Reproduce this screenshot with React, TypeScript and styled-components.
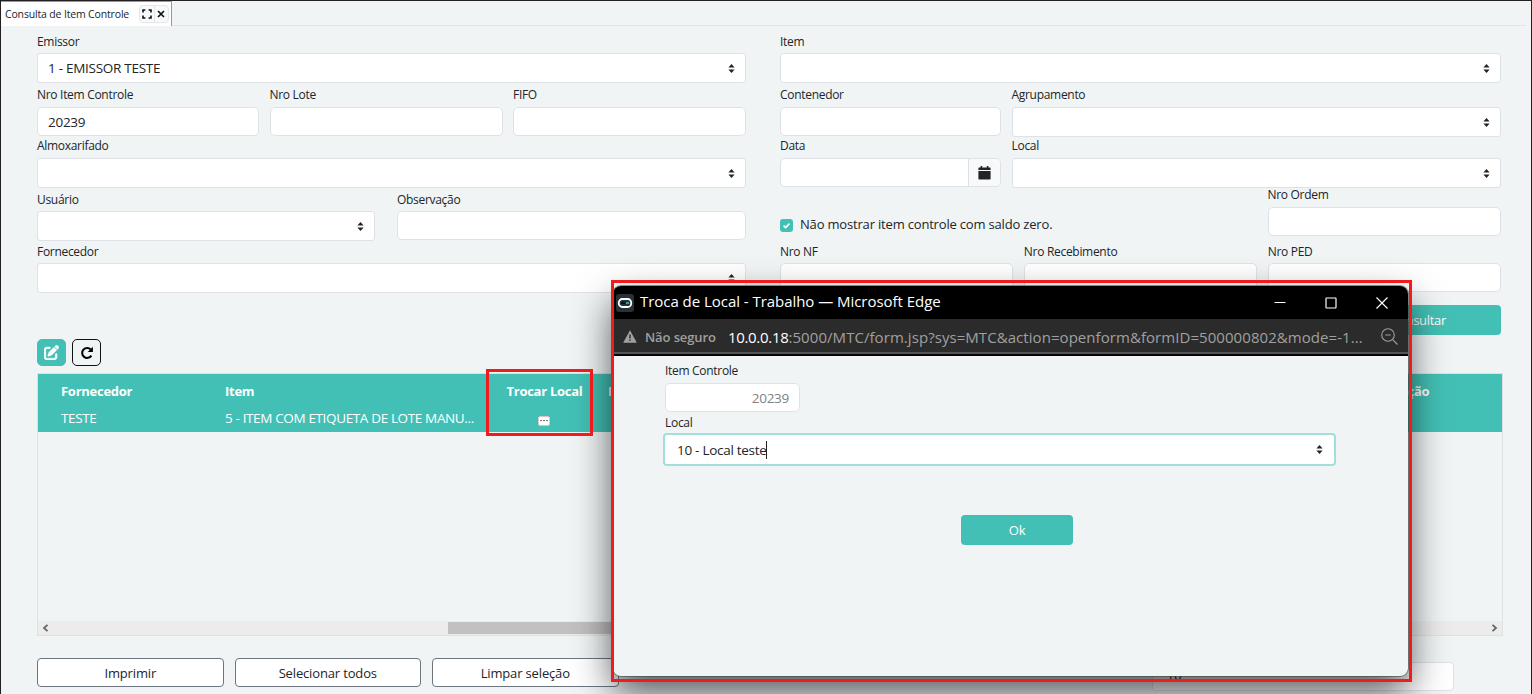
import React from "react";
import styled, { createGlobalStyle, css } from "styled-components";

const teal = "#43c0b5";
const pageBg = "#f0f4f5";
const line = "#dee2e6";
const ink = "#212529";
const red = "#ee1c1c";

const GlobalStyle = createGlobalStyle`
  * { box-sizing: border-box; }
  body { margin: 0; background: ${pageBg}; overflow: hidden; }
  body, input, button { font-family: "Open Sans", "Noto Sans", sans-serif; color: ${ink}; }
`;

const Page = styled.div`
  position: relative;
  width: 1532px;
  height: 694px;
  overflow: hidden;
  background: ${pageBg};
  border: 1px solid #231f20;
  border-bottom: 0;
`;

const TabBar = styled.div`
  display: flex;
  height: 25px;
  margin: 0 5px 1px 0;
  border-bottom: 1px solid #e1e5e8;
`;

const Tab = styled.div`
  display: flex;
  align-items: center;
  width: 171px;
  height: 25px;
  padding-left: 4px;
  background: #fff;
  border-top: 1px solid ${teal};
  border-right: 1px solid ${teal};
`;

const TabTitle = styled.span`
  flex: 1;
  font-size: 10.5px;
  letter-spacing: -0.16px;
  line-height: 22px;
  white-space: nowrap;
`;

const TabTools = styled.div`
  display: flex;
  width: 30px;
  height: 18px;
  margin-right: 2px;
  border: 1px solid #e3e6ea;
  border-radius: 4px;
  background: #f8f9fa;
`;

const TabTool = styled.span`
  display: flex;
  flex: 1;
  align-items: center;
  justify-content: center;
  & + & { border-left: 1px solid #e3e6ea; }
`;

const Form = styled.div`
  display: grid;
  grid-template-columns: 709px 721px;
  column-gap: 34px;
  padding: 6px 0 0 36px;
`;

const FormColumn = styled.div`
  display: flex;
  flex-direction: column;
`;

const FormRow = styled.div<{ $h: number; $gap?: number }>`
  display: flex;
  gap: ${(p) => p.$gap ?? 10.5}px;
  height: ${(p) => p.$h}px;
`;

const FieldBox = styled.div<{ $w?: number; $up?: number }>`
  ${(p) => (p.$w ? `width: ${p.$w}px;` : "flex: 1;")}
  margin-top: ${(p) => -(p.$up ?? 0)}px;
`;

const Label = styled.div<{ $tall?: boolean }>`
  height: 20px;
  font-size: 12px;
  line-height: ${(p) => (p.$tall ? 17 : 16)}px;
  letter-spacing: -0.3px;
  white-space: nowrap;
`;

const controlText = css`
  font-size: 13.5px;
  letter-spacing: -0.28px;
  white-space: nowrap;
`;

const Control = styled.div<{ $select?: boolean }>`
  display: flex;
  align-items: center;
  justify-content: space-between;
  height: ${(p) => (p.$select ? 30 : 29)}px;
  padding: 0 10px;
  background: #fff;
  border: 1px solid ${line};
  border-radius: ${(p) => (p.$select ? 3 : 5)}px;
  ${controlText}
`;

const DateGroup = styled.div`
  display: flex;
  height: 29px;
  background: #fff;
  border: 1px solid ${line};
  border-radius: 5px;
  overflow: hidden;
`;

const DateButton = styled.span`
  display: flex;
  align-items: center;
  justify-content: center;
  width: 32px;
  margin-left: auto;
  background: #f8f9fa;
  border-left: 1px solid ${line};
`;

const CheckRow = styled.div`
  display: flex;
  flex: 1;
  align-items: center;
  gap: 7px;
  height: 20px;
  margin-top: 23px;
  font-size: 13px;
  letter-spacing: -0.18px;
  white-space: nowrap;
`;

const CheckMark = styled.span`
  display: flex;
  width: 13px;
  height: 13px;
  margin-top: 3px;
  border-radius: 3px;
  background: ${teal};
`;

const PrimaryButton = styled.button<{ $w: number }>`
  width: ${(p) => p.$w}px;
  height: 30px;
  padding: 0;
  border: 0;
  border-radius: 4px;
  background: ${teal};
  color: #fff;
  font-size: 13px;
  letter-spacing: -0.3px;
`;

const SubmitRow = styled.div`
  display: flex;
  justify-content: flex-end;
  height: 46px;
  margin-right: 30px;
  padding-top: 12px;
`;

const Toolbar = styled.div`
  display: flex;
  gap: 6px;
  padding-left: 36px;
  height: 34px;
`;

const IconButton = styled.button<{ $outline?: boolean }>`
  display: flex;
  align-items: center;
  justify-content: center;
  width: 29px;
  height: 27px;
  padding: 0;
  border: 1px solid ${(p) => (p.$outline ? "#111" : teal)};
  border-radius: 5px;
  background: ${(p) => (p.$outline ? pageBg : teal)};
`;

const Grid = styled.div`
  display: flex;
  flex-direction: column;
  width: 1466px;
  height: 263px;
  margin-left: 36px;
  border: 1px solid ${line};
`;

const GridLine = styled.div<{ $head?: boolean }>`
  display: grid;
  grid-template-columns: 164px 270px 103px 748px 1fr;
  align-items: center;
  height: ${(p) => (p.$head ? 33 : 25)}px;
  padding: 0 0 ${(p) => (p.$head ? 0 : 3)}px 23px;
  background: ${teal};
  color: #fff;
  font-size: ${(p) => (p.$head ? 13 : 13.5)}px;
  font-weight: ${(p) => (p.$head ? 700 : 400)};
  letter-spacing: ${(p) => (p.$head ? -0.27 : -0.36)}px;
  white-space: nowrap;
`;

const GridCell = styled.span<{ $center?: boolean; $pad?: number }>`
  padding-left: ${(p) => p.$pad ?? 0}px;
  display: flex;
  justify-content: ${(p) => (p.$center ? "center" : "flex-start")};
`;

const MoreButton = styled.span`
  display: flex;
  align-items: center;
  justify-content: center;
  gap: 1px;
  width: 12px;
  height: 10px;
  margin: 5px 0 0 -6px;
  border: 1px solid #d9c9c9;
  border-radius: 2px;
  background: #fff;
  i { width: 2px; height: 1px; background: #777; }
`;

const ScrollBar = styled.div`
  display: flex;
  align-items: center;
  justify-content: space-between;
  height: 14px;
  margin-top: auto;
  padding: 0 4px;
  background: #ececec;
`;

const ScrollThumb = styled.span`
  width: 420px;
  height: 12px;
  margin: 0 auto 0 399px;
  background: #c1c1c1;
`;

const Footer = styled.div`
  display: flex;
  gap: 11px;
  padding: 22px 0 0 36px;
`;

const FooterButton = styled.button`
  width: 186.5px;
  height: 29px;
  padding: 0;
  border: 1px solid #6c757d;
  border-radius: 4px;
  background: #fff;
  font-size: 13px;
  letter-spacing: -0.15px;
`;

const FooterInput = styled.div`
  width: 302px;
  height: 29px;
  margin: 4px 0 0 522px;
  padding: 3px 14px;
  border: 1px solid ${line};
  border-radius: 4px;
  background: #fff;
  ${controlText}
`;

const Highlight = styled.div<{ $x: number; $y: number; $w: number; $h: number }>`
  position: absolute;
  left: ${(p) => p.$x}px;
  top: ${(p) => p.$y}px;
  width: ${(p) => p.$w}px;
  height: ${(p) => p.$h}px;
  border: 3px solid ${red};
`;

const Popup = styled.div`
  position: absolute;
  left: 612px;
  top: 285px;
  width: 795px;
  height: 390px;
  border-radius: 8px;
  background: ${pageBg};
  box-shadow: 0 0 0 1px rgba(60, 70, 65, 0.55), 0 16px 38px rgba(0, 0, 0, 0.68);
`;

const PopupClip = styled.div`
  height: 100%;
  border-radius: 8px;
  overflow: hidden;
`;

const TitleBar = styled.div`
  display: flex;
  align-items: center;
  height: 33px;
  padding: 0 20px 0 3px;
  background: #000;
  color: #fff;
  font-size: 15px;
  white-space: nowrap;
`;

const TitleText = styled.span`
  flex: 1;
  margin: -3px 0 0 6px;
  letter-spacing: -0.04px;
`;

const WindowControls = styled.div`
  display: flex;
  gap: 39px;
`;

const AddressBar = styled.div`
  display: flex;
  align-items: center;
  height: 37px;
  padding: 0 10px 0 10px;
  background: #2b2b2b;
  border-bottom: 2px solid #050505;
  box-shadow: inset 0 -2px 0 #555;
  color: #a0a0a0;
  font-size: 15px;
  white-space: nowrap;
`;

const Unsafe = styled.span`
  margin: 0 12px 0 8px;
  font-size: 13px;
  font-weight: 600;
  letter-spacing: -0.1px;
`;

const Url = styled.span`
  flex: 1;
  letter-spacing: 0.06px;
  b { font-weight: 400; color: #fff; letter-spacing: -0.3px; }
`;

const PopupBody = styled.div`
  padding: 7px 0 0 52px;
`;

const ReadOnly = styled(Control)`
  width: 135px;
  margin-bottom: 3px;
  justify-content: flex-end;
  padding-right: 10px;
  color: #7d8186;
`;

const FocusSelect = styled(Control)`
  width: 673px;
  height: 33px;
  margin: -2px 0 49px -2px;
  padding: 0 11px 0 12px;
  border: 2px solid #a1dfda;
  border-radius: 4px;
`;

const Typed = styled.span`
  display: flex;
  align-items: center;
  &::after { content: ""; width: 1px; height: 18px; margin-left: -1px; background: #222; }
`;

const PopupActions = styled.div`
  padding-left: 296px;
`;

const Sorter = () => (
  <svg width="7" height="9" viewBox="0 0 7 9">
    <path d="M3.5 0 6.6 3.6H.4zM3.5 9 .4 5.4h6.2z" fill="#212529" />
  </svg>
);

type FieldProps = { label: string; value?: string; w?: number; select?: boolean; up?: number; tall?: boolean };

const Field = ({ label, value = "", w, select, up, tall }: FieldProps) => (
  <FieldBox $w={w} $up={up}>
    <Label $tall={tall}>{label}</Label>
    <Control $select={select}>
      <span>{value}</span>
      {select && <Sorter />}
    </Control>
  </FieldBox>
);

export default function App() {
  return (
    <>
      <GlobalStyle />
      <Page>
        <TabBar>
          <Tab>
            <TabTitle>Consulta de Item Controle</TabTitle>
            <TabTools>
              <TabTool>
                <svg width="10" height="10" viewBox="0 0 10 10" fill="none" stroke="#111" strokeWidth="1.6">
                  <path d="M3.4 1H1v2.4M6.6 1H9v2.4M3.4 9H1V6.6M6.6 9H9V6.6" />
                </svg>
              </TabTool>
              <TabTool>
                <svg width="8" height="8" viewBox="0 0 8 8" stroke="#111" strokeWidth="1.7">
                  <path d="M1 1l6 6M7 1L1 7" />
                </svg>
              </TabTool>
            </TabTools>
          </Tab>
        </TabBar>

        <Form>
          <FormColumn>
            <FormRow $h={54}><Field label="Emissor" value="1 - EMISSOR TESTE" select tall /></FormRow>
            <FormRow $h={51}>
              <Field label="Nro Item Controle" value="20239" w={222} />
              <Field label="Nro Lote" w={233} />
              <Field label="FIFO" />
            </FormRow>
            <FormRow $h={53}><Field label="Almoxarifado" select /></FormRow>
            <FormRow $h={52} $gap={22}>
              <Field label="Usuário" w={338} select tall />
              <Field label="Observação" tall />
            </FormRow>
            <FormRow $h={50}><Field label="Fornecedor" select tall /></FormRow>
          </FormColumn>
          <FormColumn>
            <FormRow $h={54}><Field label="Item" select tall /></FormRow>
            <FormRow $h={51}>
              <Field label="Contenedor" w={221} />
              <Field label="Agrupamento" select />
            </FormRow>
            <FormRow $h={53}>
              <FieldBox $w={221}>
                <Label>Data</Label>
                <DateGroup>
                  <DateButton>
                    <svg width="13" height="14" viewBox="0 0 13 14" fill="#212529">
                      <path d="M2.6 0h1.6v1.6h4.6V0h1.6v1.6h1.2c.6 0 1 .4 1 1V4H.4V2.6c0-.6.4-1 1-1h1.2zM.4 5h12.2v7.6c0 .6-.4 1-1 1H1.4c-.6 0-1-.4-1-1z" />
                    </svg>
                  </DateButton>
                </DateGroup>
              </FieldBox>
              <Field label="Local" select />
            </FormRow>
            <FormRow $h={52}>
              <CheckRow>
                <CheckMark>
                  <svg width="13" height="13" viewBox="0 0 13 13" fill="none" stroke="#fff" strokeWidth="1.6">
                    <path d="M3.6 6.6l2 2 3.8-4" />
                  </svg>
                </CheckMark>
                Não mostrar item controle com saldo zero.
              </CheckRow>
              <Field label="Nro Ordem" w={233.5} up={4} />
            </FormRow>
            <FormRow $h={50}>
              <Field label="Nro NF" tall />
              <Field label="Nro Recebimento" tall />
              <Field label="Nro PED" tall />
            </FormRow>
          </FormColumn>
        </Form>

        <SubmitRow><PrimaryButton $w={166}>Consultar</PrimaryButton></SubmitRow>

        <Toolbar>
          <IconButton aria-label="Editar">
            <svg width="15" height="15" viewBox="0 0 512 512" fill="#fff" stroke="#fff" strokeWidth="12">
              <path d="M471.6 21.7c-21.9-21.9-57.3-21.9-79.2 0L362.3 51.7l97.9 97.9 30.1-30.1c21.9-21.9 21.9-57.3 0-79.2L471.6 21.7zm-299.2 220c-6.1 6.1-10.8 13.6-13.5 21.9l-29.6 88.8c-2.9 8.6-.6 18.1 5.8 24.6s15.9 8.7 24.6 5.8l88.8-29.6c8.2-2.7 15.7-7.4 21.9-13.5L437.7 172.3 339.7 74.3 172.4 241.7zM96 64c-53 0-96 43-96 96v256c0 53 43 96 96 96h256c53 0 96-43 96-96v-96c0-17.7-14.3-32-32-32s-32 14.3-32 32v96c0 17.7-14.3 32-32 32H96c-17.7 0-32-14.3-32-32V160c0-17.7 14.3-32 32-32h96c17.7 0 32-14.3 32-32s-14.3-32-32-32H96z" />
            </svg>
          </IconButton>
          <IconButton $outline aria-label="Atualizar">
            <svg width="14" height="14" viewBox="0 0 14 14" fill="none" stroke="#000" strokeWidth="2">
              <path d="M11.4 9.6A5 5 0 1 1 10.9 3.6" />
              <path d="M12.9.8v5.1H7.8z" fill="#000" stroke="none" />
            </svg>
          </IconButton>
        </Toolbar>

        <Grid>
          <GridLine $head>
            <GridCell>Fornecedor</GridCell>
            <GridCell>Item</GridCell>
            <GridCell $pad={11.5}>Trocar Local</GridCell>
            <GridCell $pad={10}>Nro Lote</GridCell>
            <GridCell $pad={9.5}>Observação</GridCell>
          </GridLine>
          <GridLine>
            <GridCell>TESTE</GridCell>
            <GridCell>5 - ITEM COM ETIQUETA DE LOTE MANU...</GridCell>
            <GridCell $center><MoreButton><i /><i /><i /></MoreButton></GridCell>
          </GridLine>
          <ScrollBar>
            <svg width="7" height="8" viewBox="0 0 7 8" fill="none" stroke="#666" strokeWidth="1.8"><path d="M5.5 .8L2 4l3.5 3.2" /></svg>
            <ScrollThumb />
            <svg width="7" height="8" viewBox="0 0 7 8" fill="none" stroke="#666" strokeWidth="1.8"><path d="M1.5 .8L5 4 1.5 7.2" /></svg>
          </ScrollBar>
        </Grid>

        <Footer>
          <FooterButton>Imprimir</FooterButton>
          <FooterButton>Selecionar todos</FooterButton>
          <FooterButton>Limpar seleção</FooterButton>
          <FooterInput>10</FooterInput>
        </Footer>

        <Popup>
          <PopupClip>
            <TitleBar>
              <svg width="18" height="18" viewBox="0 0 18 18">
                <rect width="18" height="18" rx="3" fill="#263238" />
                <rect x="2.8" y="5" width="12.4" height="8" rx="3.5" fill="#263238" stroke="#fff" strokeWidth="1.8" />
                <path d="M5 9h4.5" stroke="#111" strokeWidth="2" />
                <path d="M10 9h3" stroke={teal} strokeWidth="1.5" />
              </svg>
              <TitleText>Troca de Local - Trabalho — Microsoft Edge</TitleText>
              <WindowControls>
                <svg width="12" height="12" viewBox="0 0 12 12" stroke="#fff"><path d="M.5 5.5h11" /></svg>
                <svg width="12" height="12" viewBox="0 0 12 12" fill="none" stroke="#fff" strokeWidth="1.2"><rect x="1" y="1" width="10" height="10" rx=".5" /></svg>
                <svg width="12" height="12" viewBox="0 0 12 12" stroke="#fff" strokeWidth="1.2"><path d="M.5.5l11 11M11.5.5l-11 11" /></svg>
              </WindowControls>
            </TitleBar>
            <AddressBar>
              <svg width="14" height="13" viewBox="0 0 14 13">
                <path d="M7 .3 13.8 12.7H.2z" fill="#a0a0a0" />
                <path d="M7 4.5v4M7 9.6v1.4" stroke="#2b2b2b" strokeWidth="1.4" />
              </svg>
              <Unsafe>Não seguro</Unsafe>
              <Url><b>10.0.0.18</b>:5000/MTC/form.jsp?sys=MTC&amp;action=openform&amp;formID=500000802&amp;mode=-1...</Url>
              <svg width="17" height="17" viewBox="0 0 17 17" fill="none" stroke="#a0a0a0" strokeWidth="1.1">
                <circle cx="7" cy="7" r="6.3" />
                <path d="M4.3 7h5.4M11.6 11.6l4.9 4.9" />
              </svg>
            </AddressBar>
            <PopupBody>
              <Label>Item Controle</Label>
              <ReadOnly>20239</ReadOnly>
              <Label>Local</Label>
              <FocusSelect $select>
                <Typed>10 - Local teste</Typed>
                <Sorter />
              </FocusSelect>
              <PopupActions><PrimaryButton $w={112}>Ok</PrimaryButton></PopupActions>
            </PopupBody>
          </PopupClip>
        </Popup>

        <Highlight $x={485} $y={368} $w={107} $h={67} />
        <Highlight $x={609.5} $y={279} $w={801} $h={402} />
      </Page>
    </>
  );
}
